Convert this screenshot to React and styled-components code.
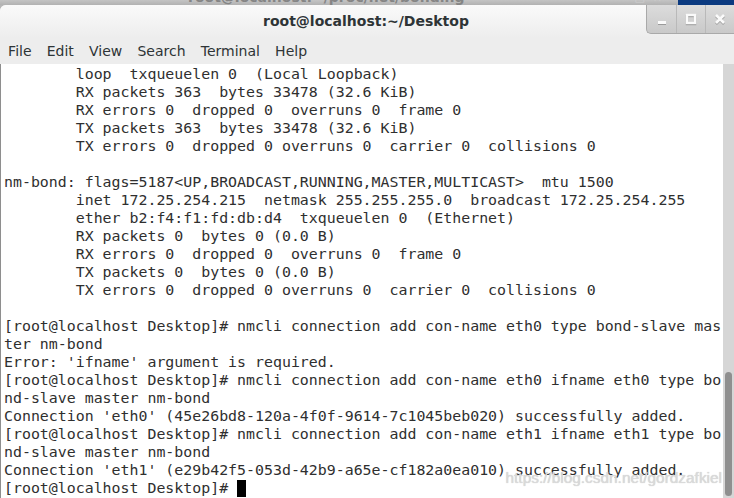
import React from "react";
import styled, { createGlobalStyle } from "styled-components";

const GlobalStyle = createGlobalStyle`
  html, body {
    margin: 0;
    padding: 0;
    overflow: hidden;
    background: #b4b4b4;
  }
`;

const Screen = styled.div`
  width: 734px;
  height: 498px;
  display: flex;
  flex-direction: column;
  overflow: hidden;
  background: #b7b7b7;
`;

const BackWindow = styled.div`
  height: 5px;
  flex: none;
  display: flex;
  overflow: hidden;
  background: linear-gradient(#c4c4c4, #b2b2b2);
`;

const BackTitle = styled.div`
  flex: 1;
  margin-top: -11px;
  padding-left: 188px;
  font: bold 14px/16px "DejaVu Sans", sans-serif;
  color: #858585;
  white-space: nowrap;
`;

const BackControls = styled.div`
  display: flex;
  gap: 8px;
  margin-top: -8px;
  padding-right: 16px;
  font: bold 11px/12px "DejaVu Sans", sans-serif;
  color: #cfcfcf;
`;

const DesktopBlue = styled.div`
  width: 56px;
  background: #0b3a80;
`;

const Window = styled.div`
  flex: 1;
  min-height: 0;
  display: flex;
  flex-direction: column;
  background: #ededed;
  border-top-left-radius: 6px;
  overflow: hidden;
`;

const TitleBar = styled.header`
  height: 33px;
  flex: none;
  display: grid;
  grid-template-columns: 1fr auto 1fr;
  background: linear-gradient(#fafafa, #ededed);
`;

const Title = styled.h1`
  grid-column: 2;
  margin: 0;
  padding-right: 2px;
  font: bold 14px/32px "DejaVu Sans", sans-serif;
  color: #2e3436;
`;

const Controls = styled.div`
  grid-column: 3;
  justify-self: end;
  align-self: start;
  display: flex;
  height: 28px;
  border-left: 1px solid #a9a9a9;
  border-bottom: 1px solid #a9a9a9;
  border-bottom-left-radius: 5px;
  background: linear-gradient(#dcdcdc, #c9c9c9);
  overflow: hidden;
`;

const ControlButton = styled.button`
  width: 29px;
  padding: 0;
  border: 0;
  border-left: ${({ $first }) => ($first ? "0" : "1px solid #b9b9b9")};
  background: transparent;
  display: flex;
  align-items: center;
  justify-content: center;
  & svg {
    filter: drop-shadow(0 1px 0 #9a9a9a);
  }
`;

const MenuBar = styled.nav`
  height: 26px;
  flex: none;
  display: flex;
  align-items: center;
  padding: 1px 0 0 0.5px;
  box-sizing: border-box;
`;

const MenuItem = styled.span`
  padding: 0 7.6px;
  font: 14px/25px "DejaVu Sans", sans-serif;
  color: #2e3436;
`;

const Terminal = styled.main`
  flex: 1;
  min-height: 0;
  display: flex;
  position: relative;
  background: #ffffff;
  border-left: 1px solid #8e8e8e;
`;

const Output = styled.pre`
  flex: 1;
  margin: 0;
  padding: 1px 0 0 3px;
  overflow: hidden;
  font: 14.9px/18px "DejaVu Sans Mono", monospace;
  color: #2f2f2f;
  white-space: pre;
`;

const Cursor = styled.span`
  display: inline-block;
  width: 9px;
  height: 17px;
  margin-top: 1px;
  vertical-align: top;
  background: #000;
`;

const Scrollbar = styled.div`
  width: 11px;
  flex: none;
  display: flex;
  flex-direction: column;
  justify-content: flex-end;
  align-items: center;
  padding-bottom: 2px;
  box-sizing: border-box;
  background: #d6d6d6;
`;

const Thumb = styled.div`
  width: 7px;
  height: 124px;
  border-radius: 4px;
  background: #8f8f8f;
`;

const Watermark = styled.span`
  position: absolute;
  right: 12px;
  bottom: 11px;
  font: 15.4px/18px "Liberation Sans", Arial, sans-serif;
  color: #dadada;
  text-shadow: 0 0 1px #c4c4c4;
  pointer-events: none;
`;

const lines = [
  "        loop  txqueuelen 0  (Local Loopback)",
  "        RX packets 363  bytes 33478 (32.6 KiB)",
  "        RX errors 0  dropped 0  overruns 0  frame 0",
  "        TX packets 363  bytes 33478 (32.6 KiB)",
  "        TX errors 0  dropped 0 overruns 0  carrier 0  collisions 0",
  "",
  "nm-bond: flags=5187<UP,BROADCAST,RUNNING,MASTER,MULTICAST>  mtu 1500",
  "        inet 172.25.254.215  netmask 255.255.255.0  broadcast 172.25.254.255",
  "        ether b2:f4:f1:fd:db:d4  txqueuelen 0  (Ethernet)",
  "        RX packets 0  bytes 0 (0.0 B)",
  "        RX errors 0  dropped 0  overruns 0  frame 0",
  "        TX packets 0  bytes 0 (0.0 B)",
  "        TX errors 0  dropped 0 overruns 0  carrier 0  collisions 0",
  "",
  "[root@localhost Desktop]# nmcli connection add con-name eth0 type bond-slave mas",
  "ter nm-bond",
  "Error: 'ifname' argument is required.",
  "[root@localhost Desktop]# nmcli connection add con-name eth0 ifname eth0 type bo",
  "nd-slave master nm-bond",
  "Connection 'eth0' (45e26bd8-120a-4f0f-9614-7c1045beb020) successfully added.",
  "[root@localhost Desktop]# nmcli connection add con-name eth1 ifname eth1 type bo",
  "nd-slave master nm-bond",
  "Connection 'eth1' (e29b42f5-053d-42b9-a65e-cf182a0ea010) successfully added.",
];

const menus = ["File", "Edit", "View", "Search", "Terminal", "Help"];

const App = () => (
  <>
    <GlobalStyle />
    <Screen>
      <BackWindow>
        <BackTitle>root@localhost:~/proc/net/bonding</BackTitle>
        <BackControls>
          <span>□</span>
          <span>×</span>
        </BackControls>
        <DesktopBlue />
      </BackWindow>
      <Window>
        <TitleBar>
          <Title>root@localhost:~/Desktop</Title>
          <Controls>
            <ControlButton $first aria-label="Minimize">
              <svg width="10" height="12" viewBox="0 0 10 12">
                <rect x="1" y="8" width="8" height="3" fill="#fafafa" />
              </svg>
            </ControlButton>
            <ControlButton aria-label="Maximize">
              <svg width="12" height="12" viewBox="0 0 12 12">
                <rect x="2" y="2" width="8" height="8" fill="none" stroke="#fafafa" strokeWidth="2.4" />
              </svg>
            </ControlButton>
            <ControlButton aria-label="Close">
              <svg width="12" height="12" viewBox="0 0 12 12">
                <path d="M2 2 L10 10 M10 2 L2 10" stroke="#fafafa" strokeWidth="2.6" />
              </svg>
            </ControlButton>
          </Controls>
        </TitleBar>
        <MenuBar>
          {menus.map((m) => (
            <MenuItem key={m}>{m}</MenuItem>
          ))}
        </MenuBar>
        <Terminal>
          <Output>
            {lines.join("\n")}
            {"\n[root@localhost Desktop]# "}
            <Cursor />
          </Output>
          <Scrollbar>
            <Thumb />
          </Scrollbar>
          <Watermark>https://blog.csdn.net/gordzafkiel</Watermark>
        </Terminal>
      </Window>
    </Screen>
  </>
);

export default App;
